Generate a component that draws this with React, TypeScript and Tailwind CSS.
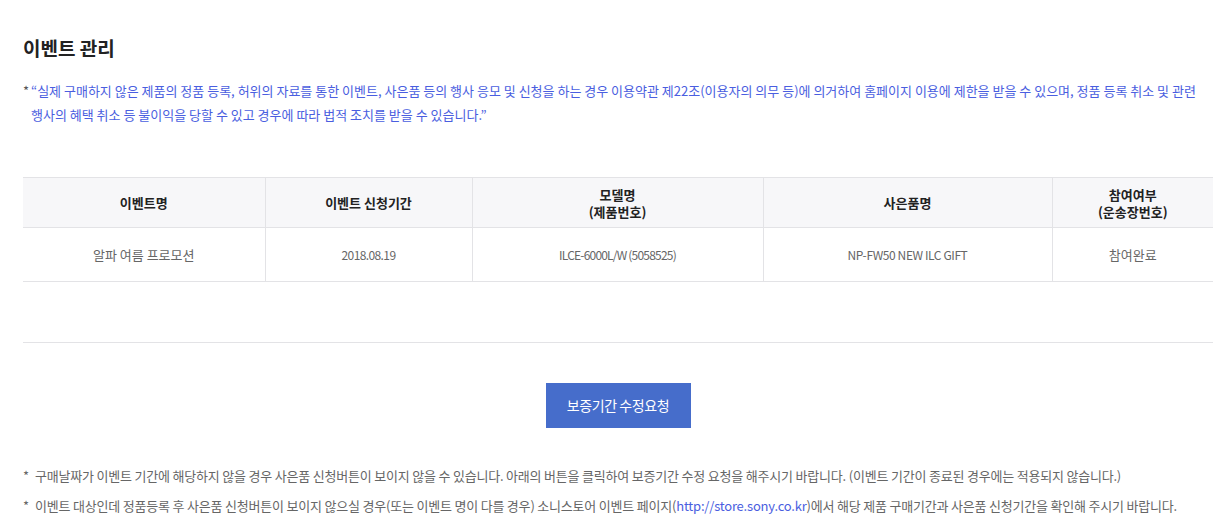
const font = "font-['Noto_Sans_CJK_KR','Noto_Sans',sans-serif]";

const rows = [
  {
    name: '알파 여름 프로모션',
    period: '2018.08.19',
    model: 'ILCE-6000L/W (5058525)',
    gift: 'NP-FW50 NEW ILC GIFT',
    status: '참여완료',
  },
];

export default function App() {
  return (
    <div className={`${font} bg-white w-[1221px] h-[523px] overflow-hidden pl-[23px] pr-[8px]`}>
      <h2 className="pt-[34px] text-[19px] font-bold leading-[28px] text-[#222]">이벤트 관리</h2>

      <div className="mt-[17px] flex text-[13px] leading-[24px] text-[#4a5ee0]">
        <span className="w-[8px] shrink-0 text-[#555]">*</span>
        <p className="break-keep">
          “실제 구매하지 않은 제품의 정품 등록, 허위의 자료를 통한 이벤트, 사은품 등의 행사 응모 및 신청을 하는 경우 이용약관 제22조(이용자의 의무 등)에 의거하여 홈페이지 이용에 제한을 받을 수 있으며, 정품 등록 취소 및 관련 행사의 혜택 취소 등 불이익을 당할 수 있고 경우에 따라 법적 조치를 받을 수 있습니다.”
        </p>
      </div>

      <table className="mt-[50px] w-[1190px] border-collapse table-fixed text-[13px]">
        <colgroup>
          <col className="w-[242px]" />
          <col className="w-[207px]" />
          <col className="w-[291px]" />
          <col className="w-[289px]" />
          <col />
        </colgroup>
        <thead>
          <tr className="bg-[#f7f7f9] border-t border-b border-[#e3e3e6] h-[50px] text-[#222] leading-[17px]">
            <th className="font-bold">이벤트명</th>
            <th className="border-l border-[#e3e3e6] font-bold">이벤트 신청기간</th>
            <th className="border-l border-[#e3e3e6] font-bold">모델명<br />(제품번호)</th>
            <th className="border-l border-[#e3e3e6] font-bold">사은품명</th>
            <th className="border-l border-[#e3e3e6] font-bold">참여여부<br />(운송장번호)</th>
          </tr>
        </thead>
        <tbody>
          {rows.map((r) => (
            <tr key={r.name} className="border-b border-[#e3e3e6] h-[54px] text-center text-[#666]">
              <td>{r.name}</td>
              <td className="border-l border-[#e3e3e6] text-[12px] tracking-[-0.6px]">{r.period}</td>
              <td className="border-l border-[#e3e3e6] text-[12px] tracking-[-0.8px]">{r.model}</td>
              <td className="border-l border-[#e3e3e6] text-[12px] tracking-[-0.4px]">{r.gift}</td>
              <td className="border-l border-[#e3e3e6]">{r.status}</td>
            </tr>
          ))}
        </tbody>
      </table>

      <div className="mt-[60px] w-[1190px] border-t border-[#e3e3e6]" />

      <div className="w-[1190px] flex justify-center mt-[40px]">
        <button className="w-[145px] h-[45px] bg-[#466dcb] text-white text-[14px] tracking-[-0.4px]">보증기간 수정요청</button>
      </div>

      <ul className="mt-[33px] text-[13px] leading-[30px] text-[#666] tracking-[-0.2px]">
        <li className="flex">
          <span className="w-[12px] shrink-0">*</span>
          <span>구매날짜가 이벤트 기간에 해당하지 않을 경우 사은품 신청버튼이 보이지 않을 수 있습니다. 아래의 버튼을 클릭하여 보증기간 수정 요청을 해주시기 바랍니다. (이벤트 기간이 종료된 경우에는 적용되지 않습니다.)</span>
        </li>
        <li className="flex">
          <span className="w-[12px] shrink-0">*</span>
          <span>
            이벤트 대상인데 정품등록 후 사은품 신청버튼이 보이지 않으실 경우(또는 이벤트 명이 다를 경우) 소니스토어 이벤트 페이지(
            <a className="text-[#4a5ee0]">http://store.sony.co.kr</a>)에서 해당 제품 구매기간과 사은품 신청기간을 확인해 주시기 바랍니다.
          </span>
        </li>
      </ul>
    </div>
  );
}
